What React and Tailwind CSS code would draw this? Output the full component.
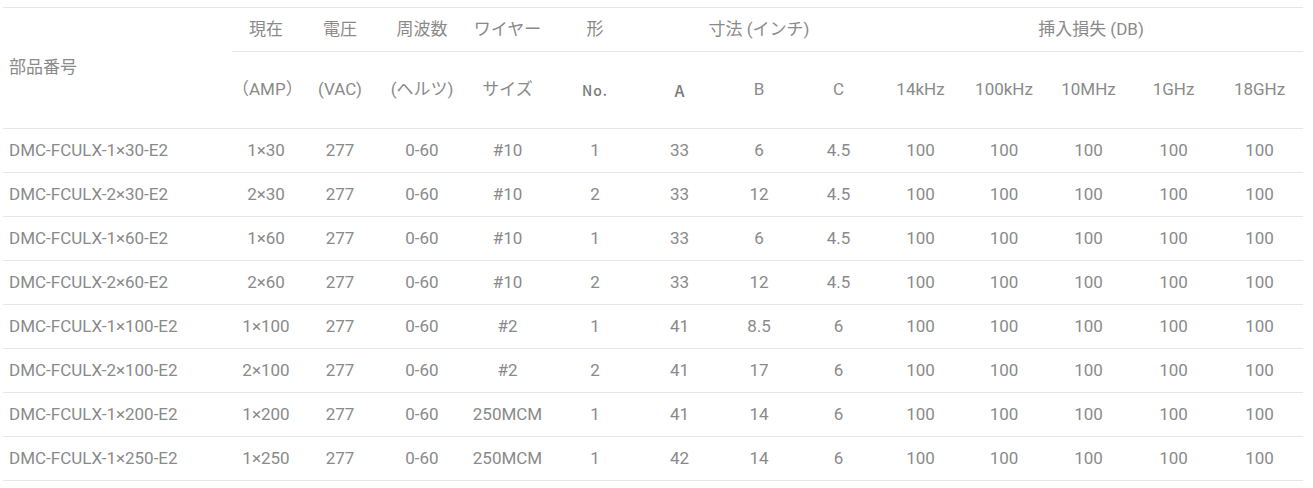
const rows = [
  ['DMC-FCULX-1×30-E2', '1×30', '277', '0-60', '#10', '1', '33', '6', '4.5'],
  ['DMC-FCULX-2×30-E2', '2×30', '277', '0-60', '#10', '2', '33', '12', '4.5'],
  ['DMC-FCULX-1×60-E2', '1×60', '277', '0-60', '#10', '1', '33', '6', '4.5'],
  ['DMC-FCULX-2×60-E2', '2×60', '277', '0-60', '#10', '2', '33', '12', '4.5'],
  ['DMC-FCULX-1×100-E2', '1×100', '277', '0-60', '#2', '1', '41', '8.5', '6'],
  ['DMC-FCULX-2×100-E2', '2×100', '277', '0-60', '#2', '2', '41', '17', '6'],
  ['DMC-FCULX-1×200-E2', '1×200', '277', '0-60', '250MCM', '1', '41', '14', '6'],
  ['DMC-FCULX-1×250-E2', '1×250', '277', '0-60', '250MCM', '1', '42', '14', '6'],
];

const widths = [229, 68, 80, 84, 87, 88, 81, 78, 81, 83, 84, 85, 85, 87];

export default function App() {
  return (
    <div className="bg-white min-h-screen pl-[3px] pt-[7px] text-[#8a8a8a] font-['Roboto','Noto_Sans_CJK_JP',sans-serif] text-[17px]">
      <table className="table-fixed border-collapse w-[1300px] border-t border-[#e6e6e6]">
        <colgroup>
          {widths.map((w, i) => (
            <col key={i} style={{ width: w }} />
          ))}
        </colgroup>
        <thead>
          <tr className="h-[44px]">
            <th rowSpan={2} className="text-left font-normal pl-[6px] border-b border-[#e6e6e6]">部品番号</th>
            <th className="font-normal border-b border-[#e6e6e6]">現在</th>
            <th className="font-normal border-b border-[#e6e6e6]">電圧</th>
            <th className="font-normal border-b border-[#e6e6e6]">周波数</th>
            <th className="font-normal border-b border-[#e6e6e6]">ワイヤー</th>
            <th className="font-normal border-b border-[#e6e6e6]">形</th>
            <th colSpan={3} className="font-normal border-b border-[#e6e6e6]">寸法 (インチ)</th>
            <th colSpan={5} className="font-normal border-b border-[#e6e6e6]">挿入損失 (DB)</th>
          </tr>
          <tr className="h-[77px]">
            <th className="font-normal border-b border-[#e6e6e6]">（AMP）</th>
            <th className="font-normal border-b border-[#e6e6e6]">(VAC)</th>
            <th className="font-normal border-b border-[#e6e6e6]">(ヘルツ)</th>
            <th className="font-normal border-b border-[#e6e6e6]">サイズ</th>
            <th className="font-medium text-[14px] tracking-[1px] text-[#7a7a7a] font-['Noto_Sans_CJK_JP',sans-serif] border-b border-[#e6e6e6]">No.</th>
            <th className="font-medium text-[16px] text-[#7a7a7a] font-['Noto_Sans_CJK_JP',sans-serif] border-b border-[#e6e6e6]">A</th>
            <th className="font-normal border-b border-[#e6e6e6]">B</th>
            <th className="font-normal border-b border-[#e6e6e6]">C</th>
            <th className="font-normal border-b border-[#e6e6e6]">14kHz</th>
            <th className="font-normal border-b border-[#e6e6e6]">100kHz</th>
            <th className="font-normal border-b border-[#e6e6e6]">10MHz</th>
            <th className="font-normal border-b border-[#e6e6e6]">1GHz</th>
            <th className="font-normal border-b border-[#e6e6e6]">18GHz</th>
          </tr>
        </thead>
        <tbody>
          {rows.map((r) => (
            <tr key={r[0]} className="h-[44px] border-b border-[#e6e6e6]">
              <td className="text-left pl-[6px]">{r[0]}</td>
              {r.slice(1).map((c, i) => (
                <td key={i} className="text-center">{c}</td>
              ))}
              {[0, 1, 2, 3, 4].map((i) => (
                <td key={'l' + i} className="text-center">100</td>
              ))}
            </tr>
          ))}
        </tbody>
      </table>
    </div>
  );
}
